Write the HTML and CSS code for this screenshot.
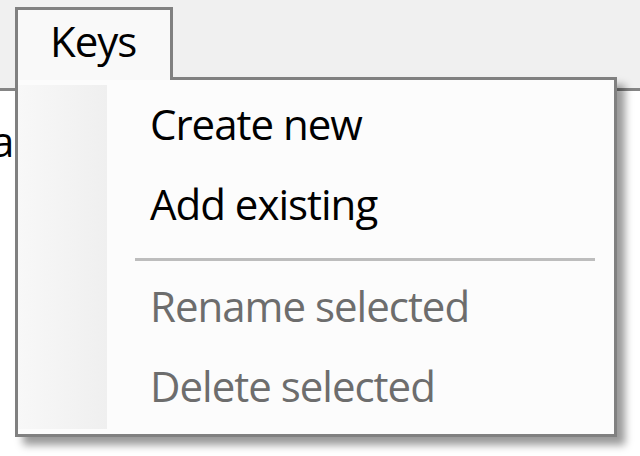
FILE: index.html
```html
<!DOCTYPE html>
<html lang="en">
<head>
  <meta charset="UTF-8" />
  <title>Keys menu</title>
  <link rel="stylesheet" href="styles.css">
</head>
<body>
  <div class="menubar"></div>
  <div class="content">
    <p class="clipped">a</p>
  </div>

  <div class="popup">
    <div class="tab">Keys</div>
    <ul class="menu">
      <li class="item">Create new</li>
      <li class="item">Add existing</li>
      <li class="sep"></li>
      <li class="item disabled">Rename selected</li>
      <li class="item disabled">Delete selected</li>
    </ul>
  </div>
</body>
</html>
```

FILE: styles.css
```css
html,
body {
  margin: 0;
  padding: 0;
  width: 640px;
  height: 456px;
  overflow: hidden;
}
body {
  font-family: "Open Sans", "Noto Sans", sans-serif;
  font-size: 42px;
  letter-spacing: -1px;
  background: #fff;
  color: #000;
  position: relative;
}
.menubar {
  height: 88px;
  background: #f0f0f0;
  border-bottom: 3px solid #858585;
}
.content {
  background: #fff;
}
.clipped {
  margin: 0 0 0 -9px;
  padding-top: 20px;
  line-height: 60px;
}
.popup {
  position: absolute;
  left: 15px;
  top: 7px;
}
.tab {
  position: relative;
  z-index: 2;
  box-sizing: border-box;
  width: 158px;
  height: 73px;
  padding: 0 0 0 32px;
  line-height: 62px;
  background: #f9f9f9;
  border: 3px solid #808080;
  border-bottom: none;
}
.menu {
  list-style: none;
  box-sizing: border-box;
  width: 602px;
  height: 360px;
  margin: -3px 0 0;
  padding: 4px 0 0;
  border: 3px solid #808080;
  background: linear-gradient(90deg, #f8f8f8, #efefef) no-repeat 0 5px / 89px calc(100% - 10px), #fcfcfc;
  box-shadow: 8px 8px 8px rgba(0, 0, 0, 0.4);
}
.item {
  height: 80px;
  line-height: 80px;
  padding-left: 132px;
  white-space: nowrap;
}
.item.disabled {
  color: #6d6d6d;
}
.sep {
  height: 3px;
  margin: 14px 19px 5px 117px;
  background: #bdbdbd;
}
```
